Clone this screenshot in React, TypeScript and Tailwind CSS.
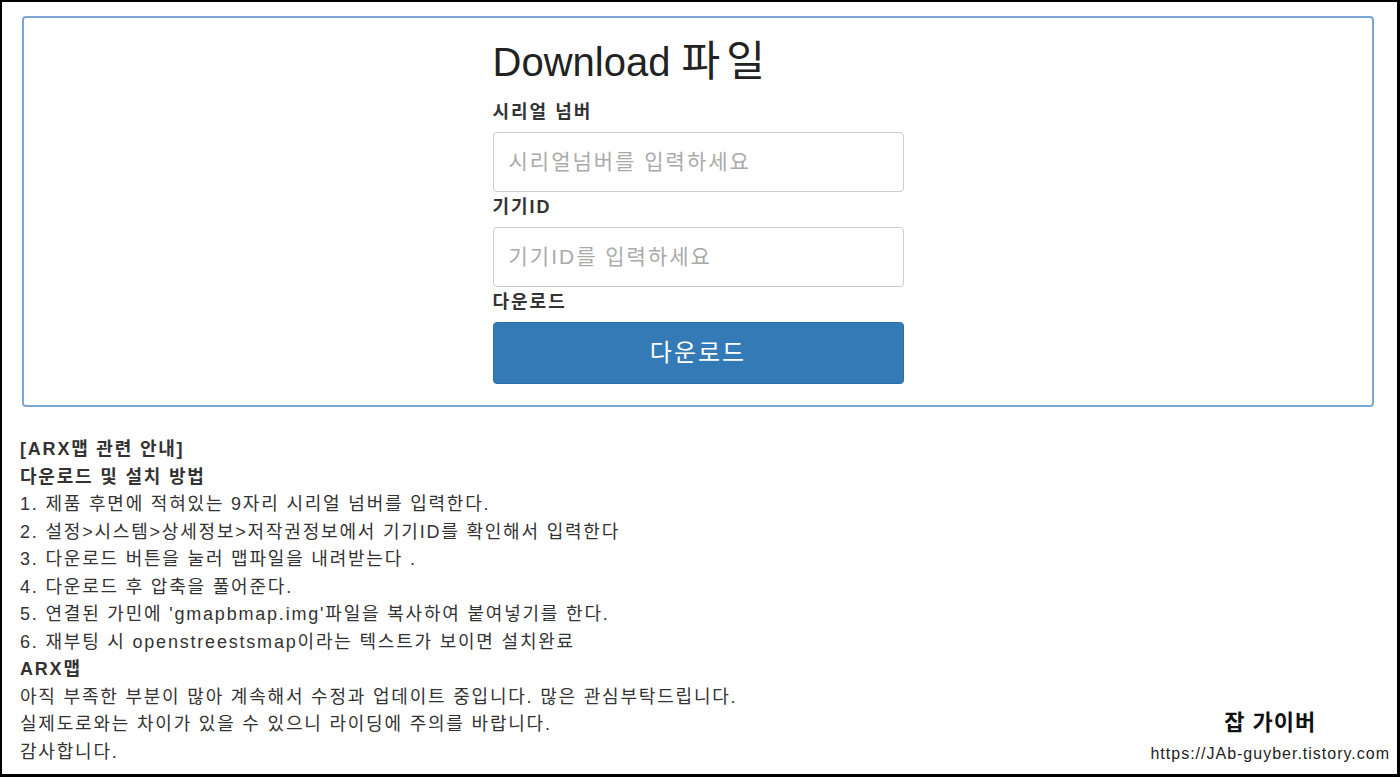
import React from "react";

const font = "font-['Liberation_Sans','Noto_Sans_CJK_KR',sans-serif]";

const steps = [
  "1. 제품 후면에 적혀있는 9자리 시리얼 넘버를 입력한다.",
  "2. 설정>시스템>상세정보>저작권정보에서 기기ID를 확인해서 입력한다",
  "3. 다운로드 버튼을 눌러 맵파일을 내려받는다 .",
  "4. 다운로드 후 압축을 풀어준다.",
  "5. 연결된 가민에 'gmapbmap.img'파일을 복사하여 붙여넣기를 한다.",
  "6. 재부팅 시 openstreestsmap이라는 텍스트가 보이면 설치완료",
];

const notes = [
  "아직 부족한 부분이 많아 계속해서 수정과 업데이트 중입니다. 많은 관심부탁드립니다.",
  "실제도로와는 차이가 있을 수 있으니 라이딩에 주의를 바랍니다.",
  "감사합니다.",
];

export default function App() {
  return (
    <div className={`w-[1400px] h-[777px] bg-white border-2 border-r-[3px] border-b-[3px] border-black overflow-hidden text-[#333] ${font}`}>
      {/* download form */}
      <div className="mt-[14px] ml-[20px] w-[1352px] h-[391px] border-2 border-[#7ba7d5] rounded-[4px] flex justify-center">
        <div className="w-[411px] pt-[22px] flex flex-col">
          <h1 className="text-[40px] leading-[44px] text-[#222] font-normal mb-[16px]">
            Download <span className="text-[42px] tracking-[6px]">파일</span>
          </h1>

          <label className="text-[18px] leading-[24px] font-bold tracking-[2px] mb-[8px]">시리얼 넘버</label>
          <input
            className="h-[60px] border border-[#ccc] rounded-[4px] px-[15px] text-[21px] tracking-[2px] placeholder:text-[#aaa] outline-none"
            placeholder="시리얼넘버를 입력하세요"
          />

          <label className="text-[18px] leading-[24px] font-bold tracking-[2px] mt-[3px] mb-[8px]">기기ID</label>
          <input
            className="h-[60px] border border-[#ccc] rounded-[4px] px-[15px] text-[21px] tracking-[2px] placeholder:text-[#aaa] outline-none"
            placeholder="기기ID를 입력하세요"
          />

          <label className="text-[18px] leading-[24px] font-bold tracking-[2px] mt-[3px] mb-[8px]">다운로드</label>
          <button className="h-[62px] bg-[#337ab7] border border-[#2e6da4] rounded-[4px] text-white text-[24px] tracking-[2px]">
            다운로드
          </button>
        </div>
      </div>

      {/* guide text */}
      <div className="flex justify-between items-end pl-[18px] pr-[7px] mt-[29px]">
        <div className="text-[18px] leading-[27.5px] tracking-[1.8px]">
          <p className="font-bold">[ARX맵 관련 안내]</p>
          <p className="font-bold">다운로드 및 설치 방법</p>
          {steps.map((s) => (
            <p key={s}>{s}</p>
          ))}
          <p className="font-bold">ARX맵</p>
          {notes.map((n) => (
            <p key={n}>{n}</p>
          ))}
        </div>

        <div className="flex flex-col items-center">
          <span className="text-[22px] leading-[30px] font-bold tracking-[1px] text-[#111] mb-[4px]">잡 가이버</span>
          <span className="text-[16px] leading-[24px] tracking-[1px] text-[#222]">https://JAb-guyber.tistory.com</span>
        </div>
      </div>
    </div>
  );
}
